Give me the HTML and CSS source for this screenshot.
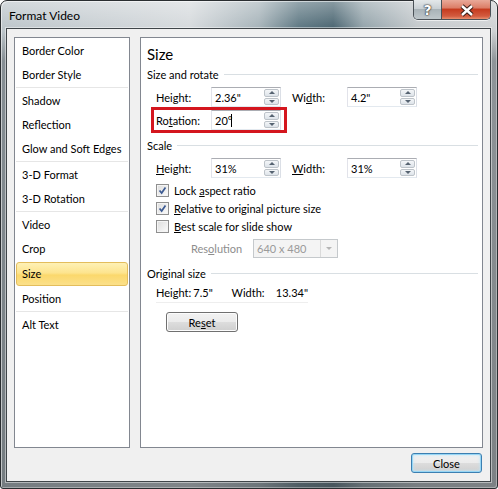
FILE: index.html
```html
<!DOCTYPE html>
<html>
<head>
  <link rel="stylesheet" href="styles.css">
</head>
<body>
  <div class="window">
    <div class="titlebar">
      <span class="title">Format Video</span>
      <div class="caption-buttons">
        <div class="cap-btn help">?</div>
        <div class="cap-btn close">
          <svg viewBox="0 0 48 18">
            <path d="M20 5l10 9M30 5l-10 9" class="x-shadow"/>
            <path d="M20 5l10 9M30 5l-10 9" class="x-mark"/>
          </svg>
        </div>
      </div>
    </div>

    <div class="client">
      <div class="panes">
        <!-- category list -->
        <ul class="nav">
          <li>Border Color</li>
          <li>Border Style</li>
          <li class="sep"></li>
          <li>Shadow</li>
          <li>Reflection</li>
          <li>Glow and Soft Edges</li>
          <li class="sep"></li>
          <li>3-D Format</li>
          <li>3-D Rotation</li>
          <li class="sep"></li>
          <li>Video</li>
          <li>Crop</li>
          <li class="selected">Size</li>
          <li>Position</li>
          <li class="sep"></li>
          <li>Alt Text</li>
        </ul>

        <!-- size page -->
        <div class="page">
          <h1>Size</h1>

          <div class="group-title"><span>Size and rotate</span></div>
          <div class="rows">
            <div class="field-row first">
              <span class="label">Hei<u>g</u>ht:</span>
              <div class="spin"><span>2.36"</span><div class="spin-btns"><i class="up"></i><i class="down"></i></div></div>
              <span class="label second">Wi<u>d</u>th:</span>
              <div class="spin"><span>4.2"</span><div class="spin-btns"><i class="up"></i><i class="down"></i></div></div>
            </div>
            <div class="rotate-box">
              <span class="label">Ro<u>t</u>ation:</span>
              <div class="spin"><span>20°<b class="caret"></b></span><div class="spin-btns"><i class="up"></i><i class="down"></i></div></div>
            </div>
          </div>

          <div class="group-title scale"><span>Scale</span></div>
          <div class="rows">
            <div class="field-row first">
              <span class="label"><u>H</u>eight:</span>
              <div class="spin"><span>31%</span><div class="spin-btns"><i class="up"></i><i class="down"></i></div></div>
              <span class="label second"><u>W</u>idth:</span>
              <div class="spin"><span>31%</span><div class="spin-btns"><i class="up"></i><i class="down"></i></div></div>
            </div>
            <div class="check-row first-check">
              <span class="checkbox checked"><svg viewBox="0 0 13 13"><path d="M3 6.5l2.5 3L10 3"/></svg></span>
              <span>Lock <u>a</u>spect ratio</span>
            </div>
            <div class="check-row">
              <span class="checkbox checked"><svg viewBox="0 0 13 13"><path d="M3 6.5l2.5 3L10 3"/></svg></span>
              <span><u>R</u>elative to original picture size</span>
            </div>
            <div class="check-row">
              <span class="checkbox"></span>
              <span><u>B</u>est scale for slide show</span>
            </div>
            <div class="res-row">
              <span class="res-label">Res<u>o</u>lution</span>
              <div class="combo"><span>640 x 480</span><div class="combo-btn"><i></i></div></div>
            </div>
          </div>

          <div class="group-title original"><span>Original size</span></div>
          <div class="rows">
            <div class="orig-row">
              <span class="o-label">Height:</span><span class="o-value">7.5"</span><span class="o-label wide">Width:</span><span>13.34"</span>
            </div>
            <button class="btn reset">Re<u>s</u>et</button>
          </div>
        </div>
      </div>

      <div class="footer">
        <button class="btn default">Close</button>
      </div>
    </div>
  </div>
</body>
</html>
```

FILE: styles.css
```css
body {
  margin: 0;
  font-family: Lato, "Open Sans", sans-serif;
  font-size: 11px;
  color: #000;
}

.window {
  width: 498px;
  height: 489px;
  box-sizing: border-box;
  border: 1px solid #2a2e31;
  border-radius: 7px 7px 3px 3px;
  padding: 0 7px 7px 6px;
  display: flex;
  flex-direction: column;
  box-shadow: inset 1px 1px 0 rgba(255,255,255,0.55), inset -1px -1px 0 rgba(255,255,255,0.35);
  background:
    linear-gradient(to bottom, rgba(255,255,255,0.35) 0, rgba(255,255,255,0) 28px),
    linear-gradient(to bottom, rgba(0,0,0,0) 0, rgba(0,0,0,0) 30px, rgba(90,98,104,0.55) 60px, rgba(70,76,80,0.6) 100%),
    linear-gradient(to right, #bcc5ca 0%, #d6dadd 38%, #a6b3b9 52%, #5d7782 60%, #4a6571 67%, #93a3aa 73%, #c4c9cc 84%, #cfd2d4 100%);
}

/* title bar */
.titlebar {
  height: 28px;
  display: flex;
  justify-content: space-between;
  align-items: flex-start;
  padding-left: 2px;
}

.title {
  line-height: 29px;
  font-size: 12px;
}

.caption-buttons {
  display: flex;
  margin: -1px -1px 0 0;
  height: 19px;
  border: 1px solid #4a5157;
  border-top: none;
  border-radius: 0 0 5px 5px;
  overflow: hidden;
  box-shadow: 0 1px 0 rgba(255,255,255,0.6);
}

.cap-btn {
  height: 19px;
  display: flex;
  align-items: center;
  justify-content: center;
}

.cap-btn.help {
  width: 27px;
  border-right: 1px solid #4a5157;
  background: linear-gradient(to bottom, #e4e8ea 0%, #c9d0d4 45%, #a9b3b8 50%, #bfc7cb 100%);
  color: #fff;
  font-weight: bold;
  font-size: 14px;
  font-family: "DejaVu Sans", sans-serif;
  text-shadow: 0 0 1px #333, 0 0 1px #333, 0 0 2px #333;
}

.cap-btn.close {
  width: 48px;
  background: linear-gradient(to bottom, #e9a999 0%, #dc7f69 40%, #c63c20 50%, #d35b3f 85%, #e9906f 100%);
}

.cap-btn svg {
  width: 48px;
  height: 18px;
}

.x-shadow {
  fill: none;
  stroke: #3d2019;
  stroke-width: 4.5;
}

.x-mark {
  fill: none;
  stroke: #fff;
  stroke-width: 2.4;
}

/* client area */
.client {
  flex: 1;
  background: #f0f0f0;
  box-shadow: 0 0 0 1px #3f4549, 0 0 0 2px rgba(255,255,255,0.45);
  padding: 8px 7px 0 7px;
  display: flex;
  flex-direction: column;
}

.panes {
  height: 411px;
  display: flex;
  gap: 10px;
}

.nav {
  width: 116px;
  box-sizing: border-box;
  margin: 0;
  padding: 1px 0;
  list-style: none;
  background: #fff;
  border: 1px solid #828790;
  white-space: nowrap;
}

.nav li {
  height: 24px;
  line-height: 24px;
  padding-left: 7px;
}

.nav li.sep {
  height: 1px;
  margin: 0 1px 1px;
  padding: 0;
  background: #e6e6e6;
}

.nav li.selected {
  height: 22px;
  line-height: 22px;
  margin: 1px 1px 1px 1px;
  padding-left: 5px;
  border: 1px solid #e3bd5c;
  border-radius: 3px;
  background: linear-gradient(to bottom, #fef1b6 0%, #fde48e 45%, #fbd86c 55%, #fbe08a 100%);
}

.page {
  flex: 1;
  background: #fff;
  border: 1px solid #828790;
  padding: 6px 4px 0 6px;
  white-space: nowrap;
}

.page h1 {
  margin: 0;
  font-size: 15px;
  font-weight: normal;
  line-height: 20px;
}

.group-title {
  display: flex;
  align-items: center;
  gap: 5px;
  height: 16px;
  margin-top: 2px;
}

.group-title::after {
  content: "";
  flex: 1;
  height: 1px;
  background: #d9dfe3;
}

.group-title.scale {
  margin-top: 4px;
}

.group-title.original {
  margin-top: 7px;
}

.rows {
  padding-left: 9px;
}

.field-row {
  display: flex;
  align-items: center;
  height: 20px;
}

.field-row.first {
  margin-top: 5px;
}

.label {
  width: 55px;
}

.label.second {
  margin-left: 11px;
}

.spin {
  width: 70px;
  height: 20px;
  box-sizing: border-box;
  border: 1px solid #abadb3;
  border-color: #abadb3 #dbdfe6 #e3e9ef #e2e3ea;
  background: #fff;
  display: flex;
  justify-content: space-between;
  align-items: center;
  padding: 0 0 0 3px;
}

.spin-btns {
  width: 15px;
  height: 16px;
  margin-right: 1px;
  display: flex;
  flex-direction: column;
  gap: 1px;
}

.spin-btns i {
  flex: 1;
  border: 1px solid #bdc3c9;
  border-radius: 2px;
  background: linear-gradient(to bottom, #f4f6f8, #dde3e9);
  display: flex;
  align-items: center;
  justify-content: center;
}

.spin-btns i::before {
  content: "";
  border-left: 3px solid transparent;
  border-right: 3px solid transparent;
}

.spin-btns .up::before {
  border-bottom: 3px solid #566371;
}

.spin-btns .down::before {
  border-top: 3px solid #566371;
}

.caret {
  display: inline-block;
  width: 1px;
  height: 13px;
  background: #000;
  vertical-align: -2px;
  margin-left: -1px;
}

.rotate-box {
  display: flex;
  align-items: center;
  width: fit-content;
  height: 20px;
  border: 3px solid #d4161e;
  margin-left: -5px;
  padding: 0 3px 0 2px;
}

.check-row {
  display: flex;
  align-items: center;
  height: 18px;
  gap: 5px;
}

.check-row.first-check {
  margin-top: 3px;
}

.checkbox {
  width: 13px;
  height: 13px;
  box-sizing: border-box;
  border: 1px solid #8f8f8f;
  background: linear-gradient(135deg, #dcdcdc, #fbfbfb);
  box-shadow: inset 0 0 0 1px #f4f4f4;
}

.checkbox svg {
  display: block;
  width: 11px;
  height: 11px;
}

.checkbox path {
  fill: none;
  stroke: #3c5a92;
  stroke-width: 2;
}

.res-row {
  display: flex;
  align-items: center;
  height: 20px;
  margin-top: 3px;
  padding-left: 35px;
}

.res-label {
  width: 62px;
  color: #8d8d8d;
}

.combo {
  width: 85px;
  height: 19px;
  box-sizing: border-box;
  border: 1px solid #c5c9cc;
  background: #f4f4f4;
  color: #9a9a9a;
  display: flex;
  align-items: center;
  justify-content: space-between;
  padding-left: 3px;
}

.combo-btn {
  width: 16px;
  height: 17px;
  border-left: 1px solid #dadada;
  display: flex;
  align-items: center;
  justify-content: center;
}

.combo-btn i {
  border-left: 3px solid transparent;
  border-right: 3px solid transparent;
  border-top: 3px solid #b5b5b5;
}

.orig-row {
  width: 152px;
  display: flex;
  line-height: 16px;
  margin-top: 4px;
  padding-bottom: 1px;
  border-bottom: 1px solid #eeeeee;
}

.o-label {
  width: 38px;
}

.o-value {
  width: 39px;
}

.o-label.wide {
  width: 45px;
}

.btn {
  font-family: inherit;
  font-size: 11px;
  color: #000;
  height: 20px;
  border: 1px solid #707070;
  border-radius: 3px;
  background: linear-gradient(to bottom, #f2f2f2 0%, #ebebeb 50%, #dddddd 50%, #cfcfcf 100%);
  box-shadow: inset 0 0 0 1px #fcfcfc;
  padding: 0;
}

.btn.reset {
  display: block;
  width: 72px;
  margin: 9px 0 0 10px;
}

.footer {
  display: flex;
  justify-content: flex-end;
  padding: 5px 1px 0 0;
}

.btn.default {
  width: 71px;
  border-color: #3c7fb1;
  box-shadow: inset 0 0 0 1px #97d6f5, inset 0 0 3px 1px #bfe6f8;
}
```
